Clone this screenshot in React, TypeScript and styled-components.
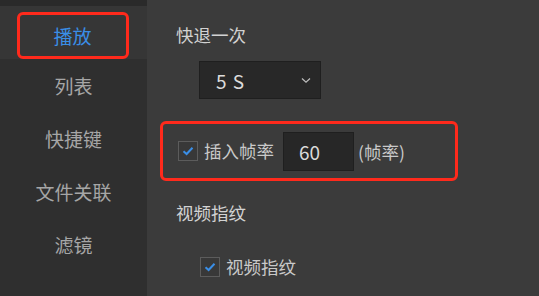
import React from "react";
import styled, { createGlobalStyle } from "styled-components";

const Global = createGlobalStyle`
  html, body { margin: 0; padding: 0; }
  body {
    width: 539px; height: 296px; overflow: hidden;
    background: #3a3a3a;
    font-family: "Noto Sans CJK SC", "Noto Sans", sans-serif;
  }
`;

const Page = styled.div`
  display: flex;
  width: 539px;
  height: 296px;
`;

const Sidebar = styled.nav`
  width: 147px;
  flex: none;
  background: #2f2f2f;
  padding-top: 6px;
  box-sizing: border-box;
  box-shadow: inset 0 6px 0 #2a2a2a;
  display: flex;
  flex-direction: column;
`;

const NavItem = styled.div<{ $active?: boolean }>`
  height: 53px;
  display: flex;
  align-items: center;
  justify-content: center;
  font-size: 19px;
  color: ${(p) => (p.$active ? "#3a8ee6" : "#a6a6a6")};
  background: ${(p) => (p.$active ? "#363636" : "transparent")};
`;

const ActiveFrame = styled.div`
  width: 112px;
  height: 47px;
  box-sizing: border-box;
  border: 3px solid #ff2a1c;
  border-radius: 6px;
  display: flex;
  align-items: center;
  justify-content: center;
  margin-left: -2px;
  margin-top: 6px;
`;

const Panel = styled.main`
  flex: 1;
  background: #3b3b3b;
  padding-left: 29px;
  display: flex;
  flex-direction: column;
  align-items: flex-start;
`;

const Heading = styled.div<{ $top: number }>`
  margin-top: ${(p) => p.$top}px;
  font-size: 17.5px;
  line-height: 24px;
  color: #d2d2d2;
`;

const Select = styled.div`
  margin-top: 14px;
  margin-left: 23px;
  width: 122px;
  height: 38px;
  box-sizing: border-box;
  background: #282828;
  border: 1px solid #1f1f1f;
  display: flex;
  align-items: center;
  justify-content: space-between;
  padding: 0 9px 0 16px;
  font-size: 19px;
  color: #dcdcdc;
  letter-spacing: 1px;
`;

const Highlight = styled.div`
  margin-top: 22px;
  margin-left: -16px;
  width: 298px;
  height: 60px;
  box-sizing: border-box;
  border: 3px solid #ff2a1c;
  border-radius: 6px;
  display: flex;
  align-items: center;
  padding-left: 15px;
`;

const CheckRow = styled.label<{ $indent?: number; $top?: number }>`
  display: flex;
  align-items: center;
  margin-left: ${(p) => p.$indent ?? 0}px;
  margin-top: ${(p) => p.$top ?? 0}px;
  font-size: 17.5px;
  line-height: 24px;
  color: #c9c9c9;
`;

const Box = styled.span`
  width: 20px;
  height: 20px;
  box-sizing: border-box;
  border: 1px solid #5c5c5c;
  background: #383838;
  display: flex;
  align-items: center;
  justify-content: center;
  margin-right: 6px;
`;

const NumberInput = styled.div`
  width: 71px;
  height: 39px;
  box-sizing: border-box;
  background: #272727;
  border: 1px solid #1f1f1f;
  margin-left: 9px;
  margin-right: 4px;
  padding-left: 15px;
  display: flex;
  align-items: center;
  font-size: 19px;
  color: #dadada;
`;

const Unit = styled.span`
  font-size: 17.5px;
  color: #c9c9c9;
`;

const Check = () => (
  <Box>
    <svg width="12" height="10" viewBox="0 0 12 10">
      <path d="M1.5 5.2 L4.6 8 L10.5 1.8" fill="none" stroke="#3a8ee6" strokeWidth="2" />
    </svg>
  </Box>
);

const Chevron = () => (
  <svg width="10" height="7" viewBox="0 0 10 7">
    <path d="M1 1.5 L5 5.2 L9 1.5" fill="none" stroke="#bdbdbd" strokeWidth="1.2" />
  </svg>
);

export default function App() {
  return (
    <>
      <Global />
      <Page>
        <Sidebar>
          <NavItem $active>
            <ActiveFrame>播放</ActiveFrame>
          </NavItem>
          <NavItem>列表</NavItem>
          <NavItem>快捷键</NavItem>
          <NavItem>文件关联</NavItem>
          <NavItem>滤镜</NavItem>
        </Sidebar>
        <Panel>
          <Heading $top={23}>快退一次</Heading>
          <Select>
            <span>5 S</span>
            <Chevron />
          </Select>
          <Highlight>
            <CheckRow>
              <Check />
              插入帧率
            </CheckRow>
            <NumberInput>60</NumberInput>
            <Unit>(帧率)</Unit>
          </Highlight>
          <Heading $top={20}>视频指纹</Heading>
          <CheckRow $indent={24} $top={30}>
            <Check />
            视频指纹
          </CheckRow>
        </Panel>
      </Page>
    </>
  );
}
